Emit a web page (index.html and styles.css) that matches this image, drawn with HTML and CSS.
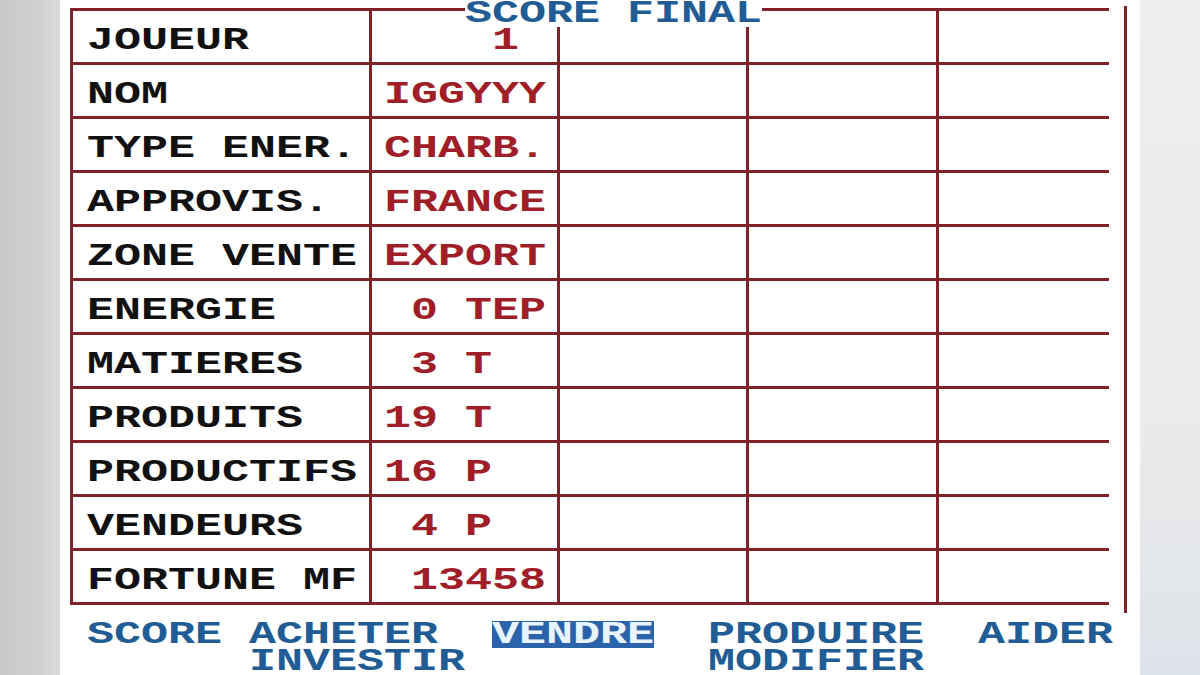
FILE: index.html
```html
<!DOCTYPE html>
<html lang="fr">
<head>
<meta charset="utf-8">
<title>Score final</title>
<link rel="stylesheet" href="styles.css">
</head>
<body>
<div class="frame">
  <div class="side side-left"></div>
  <main class="screen">
    <h1 class="title"><span class="t">SCORE FINAL</span></h1>
    <div class="board">
      <div class="grid">
        <div class="c lab"><span class="t">JOUEUR</span></div><div class="c val"><span class="t">    1</span></div><div class="c"></div><div class="c"></div><div class="c"></div>
        <div class="c lab"><span class="t">NOM</span></div><div class="c val"><span class="t">IGGYYY</span></div><div class="c"></div><div class="c"></div><div class="c"></div>
        <div class="c lab"><span class="t">TYPE ENER.</span></div><div class="c val"><span class="t">CHARB.</span></div><div class="c"></div><div class="c"></div><div class="c"></div>
        <div class="c lab"><span class="t">APPROVIS.</span></div><div class="c val"><span class="t">FRANCE</span></div><div class="c"></div><div class="c"></div><div class="c"></div>
        <div class="c lab"><span class="t">ZONE VENTE</span></div><div class="c val"><span class="t">EXPORT</span></div><div class="c"></div><div class="c"></div><div class="c"></div>
        <div class="c lab"><span class="t">ENERGIE</span></div><div class="c val"><span class="t"> 0 TEP</span></div><div class="c"></div><div class="c"></div><div class="c"></div>
        <div class="c lab"><span class="t">MATIERES</span></div><div class="c val"><span class="t"> 3 T</span></div><div class="c"></div><div class="c"></div><div class="c"></div>
        <div class="c lab"><span class="t">PRODUITS</span></div><div class="c val"><span class="t">19 T</span></div><div class="c"></div><div class="c"></div><div class="c"></div>
        <div class="c lab"><span class="t">PRODUCTIFS</span></div><div class="c val"><span class="t">16 P</span></div><div class="c"></div><div class="c"></div><div class="c"></div>
        <div class="c lab"><span class="t">VENDEURS</span></div><div class="c val"><span class="t"> 4 P</span></div><div class="c"></div><div class="c"></div><div class="c"></div>
        <div class="c lab"><span class="t">FORTUNE MF</span></div><div class="c val"><span class="t"> 13458</span></div><div class="c"></div><div class="c"></div><div class="c"></div>
      </div>
      <div class="edge"></div>
    </div>
    <nav class="menu">
      <div class="m m-score"><span class="t">SCORE</span></div>
      <div class="m m-acheter"><span class="t">ACHETER</span></div>
      <div class="m m-investir"><span class="t">INVESTIR</span></div>
      <div class="m m-vendre active"><span class="t">VENDRE</span></div>
      <div class="m m-produire"><span class="t">PRODUIRE</span></div>
      <div class="m m-modifier"><span class="t">MODIFIER</span></div>
      <div class="m m-aider"><span class="t">AIDER</span></div>
    </nav>
  </main>
  <div class="side side-right"></div>
</div>
</body>
</html>
```

FILE: styles.css
```css
* { box-sizing: border-box; margin: 0; padding: 0; }
:root { --rule: #7e2227; --blue: #215c94; --red: #a01e28; }
html, body { width: 1200px; height: 675px; overflow: hidden; }
body {
  font-family: "Liberation Mono", "DejaVu Sans Mono", monospace;
  font-weight: 700;
  font-size: 31px;
  line-height: 27px;
  color: #111;
}
.frame { display: flex; height: 675px; }
.side { width: 60px; flex: none; }
.side-left { background: linear-gradient(90deg, #c8c7c7 0%, #d4d3d3 75%, #dcdbdb 100%); }
.side-right { background: linear-gradient(180deg, #efeeee 0%, #ebeaea 65%, #dde3ea 100%); }
.screen { position: relative; width: 1080px; flex: none; background: #fff; }

.t {
  display: inline-block;
  white-space: pre;
  transform: scaleX(1.4516);
  transform-origin: 0 0;
}

.title {
  position: absolute;
  left: 405px;
  top: 0;
  width: 297px;
  height: 27px;
  background: #fff;
  color: var(--blue);
  font-size: 31px;
  font-weight: 700;
  line-height: 27px;
  z-index: 2;
}

.board { display: flex; align-items: flex-start; margin-top: 6px; padding-left: 10px; }
.grid {
  display: grid;
  grid-template-columns: 299px 188px 189px 190px 173px;
  grid-auto-rows: 54px;
  margin-top: 2px;
  border-bottom: 3px solid var(--rule);
}
.c {
  border-top: 3px solid var(--rule);
  border-left: 3px solid var(--rule);
  padding-top: 16px;
}
.lab { padding-left: 14px; color: #111; }
.val { padding-left: 12px; color: var(--red); }
.edge { width: 3px; height: 607px; margin-left: 15px; background: var(--rule); }

.menu {
  display: grid;
  grid-template-columns: repeat(40, 27px);
  grid-template-rows: 27px 27px;
  margin-top: 8px;
  color: var(--blue);
}
.m-score { grid-column: 2 / span 5; grid-row: 1; }
.m-acheter { grid-column: 8 / span 7; grid-row: 1; }
.m-investir { grid-column: 8 / span 8; grid-row: 2; }
.m-vendre { grid-column: 17 / span 6; grid-row: 1; }
.m-produire { grid-column: 25 / span 8; grid-row: 1; }
.m-modifier { grid-column: 25 / span 8; grid-row: 2; }
.m-aider { grid-column: 35 / span 5; grid-row: 1; }
.active { background: #2b63aa; color: #e8f4ff; }
```
